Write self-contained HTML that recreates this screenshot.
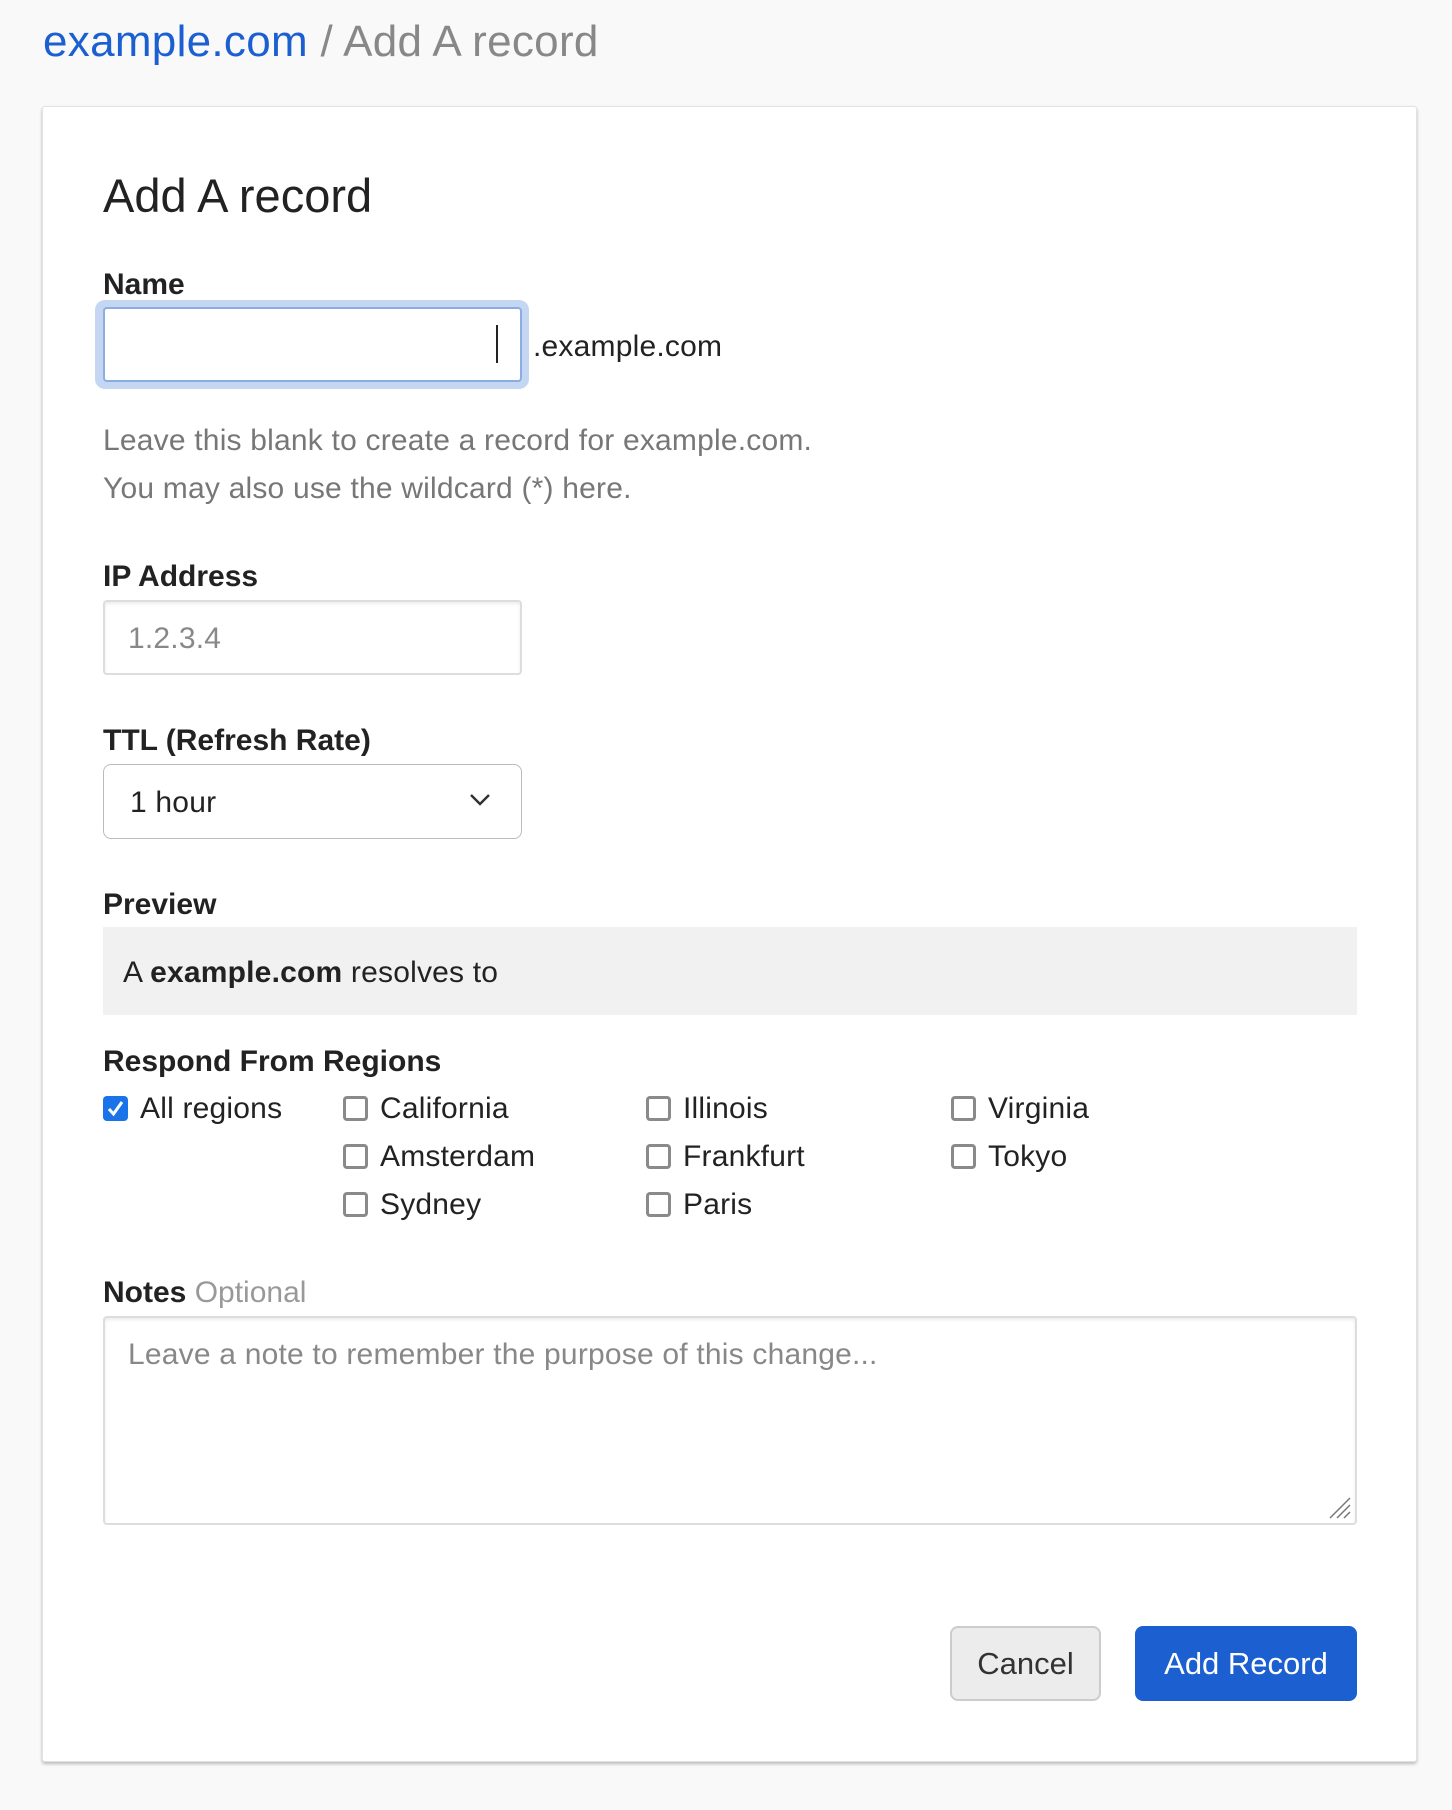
<!DOCTYPE html>
<html><head><style>
*{box-sizing:border-box;margin:0;padding:0}
body{width:1452px;height:1810px;background:#f9f9f9;font-family:"Liberation Sans",sans-serif;color:#222;position:relative;overflow:hidden}
.a{position:absolute;white-space:nowrap}
.crumb{left:43px;top:17px;font-size:44px;color:#888;letter-spacing:0.3px}
.crumb span{color:#1b5fd0}
.card{left:42px;top:106px;width:1375px;height:1656px;background:#fff;border:1px solid #e2e2e2;box-shadow:0 2px 3px rgba(0,0,0,.25);border-radius:3px}
.lbl{font-weight:bold;font-size:30px;color:#222}
.inp{left:103px;width:419px;height:75px;border:2px solid #ddd;border-radius:4px;background:#fff}
.t{font-size:30px;letter-spacing:0.2px}
.cb{width:25px;height:25px;border:3px solid #8a8a8a;border-radius:4px;background:#fff}
.btn{border-radius:8px;font-size:31px;display:flex;align-items:center;justify-content:center}
</style></head><body>
<div class="a crumb"><span>example.com</span> / Add A record</div>
<div class="a card"></div>
<div class="a" style="left:103px;top:168px;font-size:47px;color:#222">Add A record</div>
<div class="a lbl" style="left:103px;top:268px">Name</div>
<div class="a" style="left:95px;top:300px;width:434px;height:89px;border-radius:10px;background:#c4d6f1"></div>
<div class="a inp" style="top:307px;border-color:#8aaee3"></div>
<div class="a" style="left:496px;top:325px;width:2px;height:38px;background:#222"></div>
<div class="a t" style="left:533px;top:330px">.example.com</div>
<div class="a t" style="left:103px;top:424px;color:#777">Leave this blank to create a record for example.com.</div>
<div class="a t" style="left:103px;top:472px;color:#777">You may also use the wildcard (*) here.</div>
<div class="a lbl" style="left:103px;top:560px">IP Address</div>
<div class="a inp" style="top:600px;box-shadow:inset 0 2px 3px rgba(0,0,0,.08)"></div>
<div class="a t" style="left:128px;top:622px;color:#888">1.2.3.4</div>
<div class="a lbl" style="left:103px;top:724px">TTL (Refresh Rate)</div>
<div class="a inp" style="top:764px;border-width:1px;border-color:#bbb;border-radius:8px"></div>
<div class="a t" style="left:130px;top:786px">1 hour</div>
<svg class="a" style="left:468px;top:792px" width="24" height="16"><path d="M3 3l9 9 9-9" fill="none" stroke="#333" stroke-width="2.5"/></svg>
<div class="a lbl" style="left:103px;top:888px">Preview</div>
<div class="a" style="left:103px;top:927px;width:1254px;height:88px;background:#f1f1f1"></div>
<div class="a t" style="left:123px;top:956px">A <b>example.com</b> resolves to</div>
<div class="a lbl" style="left:103px;top:1045px">Respond From Regions</div>
<div class="a" style="left:103px;top:1096px;width:25px;height:25px;background:#1a73e8;border-radius:4px"></div>
<svg class="a" style="left:103px;top:1096px" width="25" height="25"><path d="M6 13l4.5 5L19 6" fill="none" stroke="#fff" stroke-width="3"/></svg>
<div class="a t" style="left:140px;top:1092px">All regions</div>
<div class="a cb" style="left:343px;top:1096px"></div><div class="a t" style="left:380px;top:1092px">California</div>
<div class="a cb" style="left:646px;top:1096px"></div><div class="a t" style="left:683px;top:1092px">Illinois</div>
<div class="a cb" style="left:951px;top:1096px"></div><div class="a t" style="left:988px;top:1092px">Virginia</div>
<div class="a cb" style="left:343px;top:1144px"></div><div class="a t" style="left:380px;top:1140px">Amsterdam</div>
<div class="a cb" style="left:646px;top:1144px"></div><div class="a t" style="left:683px;top:1140px">Frankfurt</div>
<div class="a cb" style="left:951px;top:1144px"></div><div class="a t" style="left:988px;top:1140px">Tokyo</div>
<div class="a cb" style="left:343px;top:1192px"></div><div class="a t" style="left:380px;top:1188px">Sydney</div>
<div class="a cb" style="left:646px;top:1192px"></div><div class="a t" style="left:683px;top:1188px">Paris</div>
<div class="a lbl" style="left:103px;top:1276px">Notes <span style="font-weight:normal;color:#999">Optional</span></div>
<div class="a" style="left:103px;top:1316px;width:1254px;height:209px;border:2px solid #ddd;border-radius:4px;box-shadow:inset 0 2px 3px rgba(0,0,0,.08)"></div>
<div class="a t" style="left:128px;top:1338px;color:#888">Leave a note to remember the purpose of this change...</div>
<svg class="a" style="left:1328px;top:1496px" width="24" height="24"><path d="M2 22L22 2M9 22L22 9M16 22L22 16" stroke="#777" stroke-width="1.5"/></svg>
<div class="a btn" style="left:950px;top:1626px;width:151px;height:75px;background:#ececec;border:2px solid #ccc;color:#333">Cancel</div>
<div class="a btn" style="left:1135px;top:1626px;width:222px;height:75px;background:#1b5fd0;color:#fff">Add Record</div>
</body></html>
